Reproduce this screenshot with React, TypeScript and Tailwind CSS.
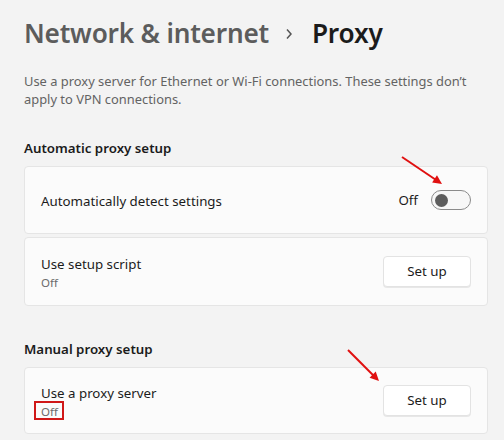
import React from "react";

const font = { fontFamily: '"Noto Sans", "Open Sans", sans-serif' };

function Arrow({ x1, y1, x2, y2 }: { x1: number; y1: number; x2: number; y2: number }) {
  const ang = Math.atan2(y2 - y1, x2 - x1);
  const len = 10;
  const spread = 0.45;
  const p1 = [x2 - len * Math.cos(ang - spread), y2 - len * Math.sin(ang - spread)];
  const p2 = [x2 - len * Math.cos(ang + spread), y2 - len * Math.sin(ang + spread)];
  return (
    <g>
      <line x1={x1} y1={y1} x2={x2 - 4 * Math.cos(ang)} y2={y2 - 4 * Math.sin(ang)} stroke="#e01010" strokeWidth="2" />
      <polygon points={`${x2},${y2} ${p1[0]},${p1[1]} ${p2[0]},${p2[1]}`} fill="#e01010" />
    </g>
  );
}

function Card({ children, className = "" }: { children: React.ReactNode; className?: string }) {
  return (
    <div className={`flex items-center justify-between rounded-[4px] border border-[#e5e5e5] bg-[#fbfbfb] pl-[16px] pr-4 ${className}`}>
      {children}
    </div>
  );
}

function SetUpButton() {
  return (
    <button className="h-[31px] w-[88px] rounded-[4px] border border-[#e3e3e3] bg-white text-[13.3px] text-[#1b1b1b] shadow-[0_1px_0_rgba(0,0,0,0.08)]">
      Set up
    </button>
  );
}

export default function App() {
  return (
    <div className="relative h-[440px] w-[504px] overflow-hidden bg-[#f3f3f3] pl-6 pr-4 pt-[15px]" style={font}>
      <h1 className="flex items-center text-[26.2px] font-semibold leading-[36px] tracking-[-0.2px]">
        <span className="text-[#5c5c5c]">Network &amp; internet</span>
        <svg width="8" height="12" viewBox="0 0 8 12" className="ml-[16px] mr-[19px] mt-[2px]">
          <path d="M2 1.5 L6 6 L2 10.5" fill="none" stroke="#555" strokeWidth="1.5" />
        </svg>
        <span className="text-[#1b1b1b]">Proxy</span>
      </h1>

      <p className="mt-[21px] pr-2 text-[12.9px] leading-[18px] text-[#636363]">
        Use a proxy server for Ethernet or Wi-Fi connections. These settings don’t apply to VPN connections.
      </p>

      <h2 className="mt-[30px] text-[13.3px] font-semibold leading-[20px] text-[#1b1b1b]">Automatic proxy setup</h2>

      <div className="mt-[8px] flex flex-col gap-[3px]">
        <Card className="h-[68px]">
          <span className="mt-[3px] text-[13.3px] text-[#1b1b1b]">Automatically detect settings</span>
          <div className="flex items-center gap-[13px]">
            <span className="mt-[2px] text-[13.3px] text-[#1b1b1b]">Off</span>
            <div className="flex h-[20px] w-[40px] items-center rounded-full border border-[#8a8a8a] bg-[#f7f7f7] px-[3px]">
              <div className="h-[13px] w-[13px] rounded-full bg-[#5d5d5d]" />
            </div>
          </div>
        </Card>
        <Card className="h-[69px]">
          <div className="mt-[2px] flex flex-col">
            <span className="text-[13.3px] leading-[19px] text-[#1b1b1b]">Use setup script</span>
            <span className="text-[11.5px] leading-[17px] text-[#6b6b6b]">Off</span>
          </div>
          <SetUpButton />
        </Card>
      </div>

      <h2 className="mt-[33px] text-[13.3px] font-semibold leading-[20px] text-[#1b1b1b]">Manual proxy setup</h2>

      <Card className="mt-[8px] h-[67px]">
        <div className="mt-[2px] flex flex-col">
          <span className="text-[13.3px] leading-[19px] text-[#1b1b1b]">Use a proxy server</span>
          <span className="relative text-[11.5px] leading-[17px] text-[#6b6b6b]">
            Off
            <span className="absolute left-[-7px] top-[-2px] h-[19px] w-[30px] border-2 border-[#d01818]" />
          </span>
        </div>
        <SetUpButton />
      </Card>

      <svg className="pointer-events-none absolute left-0 top-0" width="504" height="440">
        <Arrow x1={402} y1={157} x2={442} y2={184} />
        <Arrow x1={348} y1={350} x2={379} y2={381} />
      </svg>
    </div>
  );
}
